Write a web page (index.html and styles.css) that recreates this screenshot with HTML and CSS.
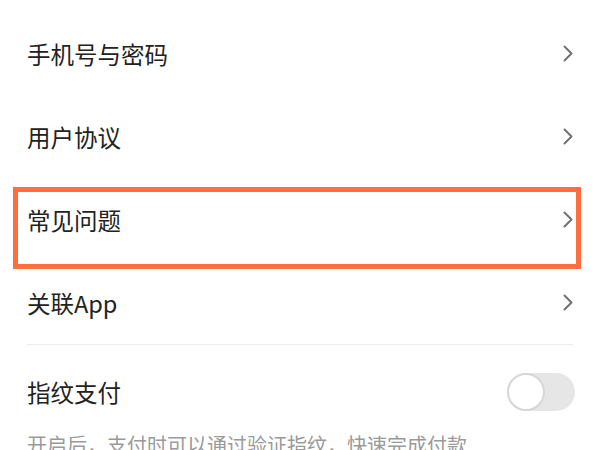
FILE: index.html
```html
<!DOCTYPE html>
<html lang="zh">

<head>
    <meta charset="UTF-8">
    <meta name="viewport" content="width=device-width, initial-scale=1.0">
    <title>设置</title>
    <link rel="stylesheet" href="styles.css">
</head>

<body>
    <div class="settings">
        <div class="row">
            <span class="label">手机号与密码</span>
            <svg class="chevron" viewBox="0 0 10 17"><polyline points="1.5,1.5 8.5,8.5 1.5,15.5" /></svg>
        </div>
        <div class="row">
            <span class="label">用户协议</span>
            <svg class="chevron" viewBox="0 0 10 17"><polyline points="1.5,1.5 8.5,8.5 1.5,15.5" /></svg>
        </div>
        <div class="row">
            <span class="label">常见问题</span>
            <svg class="chevron" viewBox="0 0 10 17"><polyline points="1.5,1.5 8.5,8.5 1.5,15.5" /></svg>
            <!-- 标注框 -->
            <div class="mark"></div>
        </div>
        <div class="row">
            <span class="label">关联App</span>
            <svg class="chevron" viewBox="0 0 10 17"><polyline points="1.5,1.5 8.5,8.5 1.5,15.5" /></svg>
        </div>

        <div class="divider"></div>

        <div class="row">
            <span class="label">指纹支付</span>
            <div class="switch"><div class="knob"></div></div>
        </div>
        <p class="hint">开启后，支付时可以通过验证指纹，快速完成付款</p>
    </div>
</body>

</html>
```

FILE: styles.css
```css
body {
    margin: 0;
    background-color: #ffffff;
    font-family: "Noto Sans CJK SC", "Noto Sans", sans-serif;
    overflow: hidden;
}

.settings {
    padding: 12px 27px 0 27px;
}

.row {
    height: 83px;
    display: flex;
    align-items: center;
    justify-content: space-between;
    position: relative;
}

.label {
    font-size: 23.5px;
    line-height: 30px;
    color: #222222;
}

.chevron {
    width: 10px;
    height: 17px;
}

.chevron polyline {
    fill: none;
    stroke: #727272;
    stroke-width: 2;
    stroke-linecap: round;
    stroke-linejoin: round;
}

.mark {
    position: absolute;
    top: 9px;
    bottom: -8px;
    left: -14px;
    right: -8px;
    border: 5px solid #ff6e40;
    pointer-events: none;
}

.divider {
    height: 1px;
    background-color: #ececec;
    margin-bottom: 5px;
}

.switch {
    width: 68px;
    height: 38px;
    margin-right: -2px;
    border-radius: 19px;
    background-color: #e6e6e6;
    position: relative;
}

.knob {
    width: 34px;
    height: 34px;
    border-radius: 50%;
    background-color: #ffffff;
    border: 2px solid #d6d6d6;
}

.hint {
    margin: 0;
    font-size: 20px;
    line-height: 24px;
    color: #9a9a9a;
    white-space: nowrap;
}
```
